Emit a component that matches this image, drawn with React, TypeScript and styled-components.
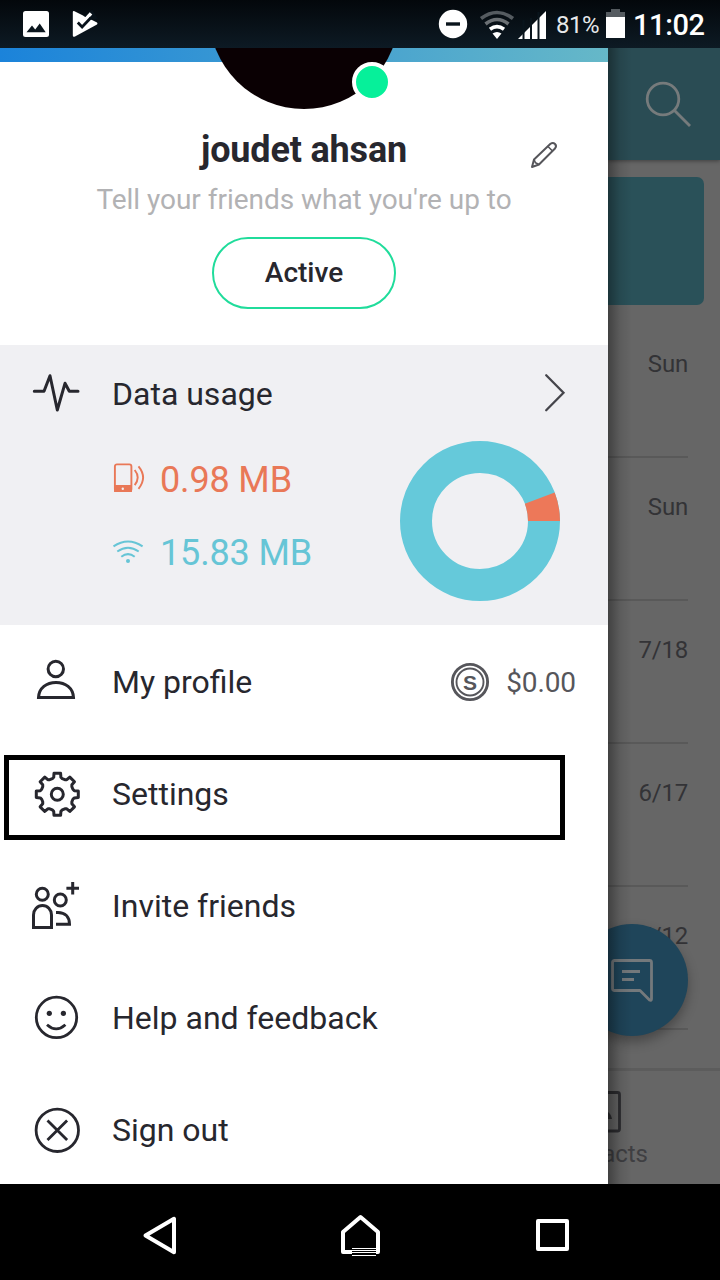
import React from "react";
import styled, { createGlobalStyle } from "styled-components";

const ink = "#27272e";

const GlobalStyle = createGlobalStyle`
  * { box-sizing: border-box; }
  body { margin: 0; background: #000; font-family: Roboto, "Liberation Sans", sans-serif; }
  svg { display: block; flex: none; }
`;

const Phone = styled.div`
  width: 720px;
  height: 1280px;
  display: flex;
  flex-direction: column;
  overflow: hidden;
`;

const StatusBar = styled.header`
  height: 48px;
  flex: none;
  display: flex;
  align-items: center;
  padding: 0 16px 0 20px;
  background: linear-gradient(#03070b, #0d1a24);
  color: #fff;
`;

const StatusGroup = styled.div<{ $end?: boolean }>`
  display: flex;
  align-items: center;
  gap: ${(p) => (p.$end ? 0 : 16)}px;
  margin-left: ${(p) => (p.$end ? "auto" : 0)};
`;

const Battery = styled.span`
  font-size: 24px;
  letter-spacing: -0.5px;
  width: 50px;
  margin-left: 8px;
  line-height: 48px;
  white-space: nowrap;
  padding-top: 2px;
  color: #e6e8ea;
`;

const Clock = styled.span`
  font-size: 29px;
  font-weight: 500;
  letter-spacing: -0.4px;
  line-height: 48px;
  width: 71px;
  margin-left: 7px;
  padding-top: 2px;
  white-space: nowrap;
`;

const Main = styled.main`
  height: 1136px;
  flex: none;
  display: flex;
`;

const Drawer = styled.aside`
  width: 608px;
  flex: none;
  background: #fff;
  overflow: hidden;
  color: ${ink};
`;

const Profile = styled.section`
  height: 297px;
  display: flex;
  flex-direction: column;
  align-items: center;
`;

const Cover = styled.div`
  width: 100%;
  height: 14px;
  flex: none;
  display: flex;
  justify-content: center;
  align-items: flex-end;
  background: linear-gradient(90deg, #1b83da, #66b8c8);
`;

const Avatar = styled.div`
  position: relative;
  width: 190px;
  height: 190px;
  flex: none;
  margin-bottom: -47px;
  border-radius: 50%;
  background: #0a0003;
  clip-path: inset(129px -20px -20px -20px);
`;

const Presence = styled.span`
  position: absolute;
  left: 143px;
  top: 143px;
  width: 40px;
  height: 40px;
  border-radius: 50%;
  border: 4px solid #fff;
  background: #06f09a;
`;

const NameRow = styled.div`
  margin-top: 67px;
  height: 42px;
  width: 100%;
  display: grid;
  grid-template-columns: 1fr auto 1fr;
  align-items: center;
`;

const Name = styled.h1`
  grid-column: 2;
  margin: 0;
  font-size: 36px;
  font-weight: 700;
  letter-spacing: -0.17px;
  line-height: 42px;
  white-space: nowrap;
`;

const EditButton = styled.span`
  justify-self: end;
  padding: 9px 48px 0 0;
`;

const Mood = styled.p`
  margin: 12px 0 0;
  font-size: 28px;
  letter-spacing: -0.03px;
  line-height: 34px;
  color: #b2b2b4;
  white-space: nowrap;
`;

const StatusPill = styled.button`
  margin: 20px 0 0;
  width: 184px;
  height: 72px;
  border: 2px solid #20dc9b;
  border-radius: 36px;
  background: #fff;
  color: ${ink};
  font: 500 28px/68px Roboto, sans-serif;
  padding: 0;
`;

const DataUsage = styled.section`
  height: 280px;
  background: #f0f0f3;
`;

const Row = styled.div`
  height: 112px;
  display: flex;
  align-items: center;
  padding: 0 32px 0 28px;
`;

const DataHeader = styled(Row)`
  height: 96px;
`;

const RowLabel = styled.span<{ $drop?: number }>`
  margin-left: 28px;
  flex: 1;
  padding-top: ${(p) => p.$drop ?? 0}px;
  font-size: 32px;
  line-height: 40px;
  white-space: nowrap;
`;

const UsageBody = styled.div`
  display: flex;
  justify-content: space-between;
  padding: 0 48px 0 112px;
`;

const UsageList = styled.div`
  display: flex;
  flex-direction: column;
  padding-top: 2px;
`;

const UsageItem = styled.div<{ $color: string }>`
  height: 73px;
  display: flex;
  align-items: center;
  gap: 15px;
  color: ${(p) => p.$color};
  font-size: 36px;
  letter-spacing: -0.15px;
  line-height: 44px;
  white-space: nowrap;
`;

const Menu = styled.nav`
  position: relative;
  padding-top: 1px;
`;

const Highlight = styled.div`
  position: absolute;
  left: 4px;
  top: 130px;
  width: 561px;
  height: 85px;
  border: 5px solid #000;
`;

const Credit = styled.span`
  display: flex;
  align-items: center;
  gap: 16px;
  font-size: 28px;
  letter-spacing: -0.1px;
  color: #56565b;
`;

const Peek = styled.div`
  position: relative;
  width: 112px;
  flex: none;
  overflow: hidden;
  background: #666;
  color: #333336;
  display: flex;
  flex-direction: column;
`;

const PeekShade = styled.div`
  position: absolute;
  inset: 0 auto 0 0;
  width: 24px;
  background: linear-gradient(90deg, rgba(0, 0, 0, 0.36), rgba(0, 0, 0, 0.1) 50%, transparent);
`;

const PeekHeader = styled.div`
  height: 112px;
  flex: none;
  padding: 32px 0 0 36px;
  background: #2a4c54;
  box-shadow: 0 1px 4px rgba(0, 0, 0, 0.4);
`;

const Banner = styled.div`
  height: 128px;
  flex: none;
  margin: 17px 16px 10px 0;
  border-radius: 0 7px 7px 0;
  background: #2a5159;
`;

const Chat = styled.div`
  height: 143px;
  flex: none;
  margin-right: 32px;
  border-bottom: 2px solid #595959;
  padding-top: 34px;
  text-align: right;
  font-size: 24px;
  letter-spacing: -0.2px;
  line-height: 30px;
`;

const Compose = styled.div`
  position: absolute;
  left: -32px;
  top: 876px;
  width: 112px;
  height: 112px;
  border-radius: 50%;
  background: #1f455a;
  box-shadow: 0 6px 12px rgba(0, 0, 0, 0.3);
  padding: 32px 0 0 32px;
`;

const Tabs = styled.div`
  margin-top: auto;
  height: 116px;
  flex: none;
  border-top: 3px solid #5c5c5c;
  background: #666;
  padding-top: 18px;
  display: flex;
  flex-direction: column;
  align-items: flex-start;
`;

const TabLabel = styled.span`
  width: 100px;
  margin: 6px 0 0 -60px;
  text-align: right;
  font-size: 24px;
  line-height: 30px;
  color: #3f3f42;
`;

const NavBar = styled.footer`
  height: 96px;
  flex: none;
  display: flex;
  align-items: center;
  justify-content: space-between;
  padding: 8px 144px 0 136px;
  background: #000;
`;

type IconProps = { children: React.ReactNode; width?: number };

const MenuIcon = ({ children, width = 3 }: IconProps) => (
  <svg width="56" height="56" viewBox="0 0 56 56" fill="none" stroke={ink} strokeWidth={width} strokeLinejoin="round">
    {children}
  </svg>
);

const gearPath = (() => {
  const points: string[] = [];
  for (let k = 0; k < 8; k++) {
    const a = (k * Math.PI) / 4;
    [[-5, 15.6], [-3.6, 17], [-3.3, 21], [3.3, 21], [3.6, 17], [5, 15.6]].forEach(([x, r]) => {
      const px = 29.3 + x * Math.cos(a) + r * Math.sin(a);
      const py = 28.3 + x * Math.sin(a) - r * Math.cos(a);
      points.push(`${px.toFixed(2)} ${py.toFixed(2)}`);
    });
  }
  return `M${points.join("L")}Z`;
})();

const StatusIcons = () => (
  <StatusGroup>
    <svg width="32" height="32" viewBox="0 0 32 32">
      <rect x="3" y="3" width="26" height="26" rx="2.5" fill="#fff" />
      <path d="M6.5 24.3 12 17.5l3.2 4 4.5-6 6 8.8z" fill="#0a151d" />
    </svg>
    <svg width="32" height="32" viewBox="0 0 32 32">
      <path d="M6 3 29 14.5Q30 15.500 29 16.500L7 28.500Q4.800 29.500 4.800 27.500V4Q4.800 2.800 6 3Z" fill="#fff" />
      <path d="m15 7.800 4-1.500 5-4.500 6 9-6 1z" fill="#08121a" />
      <path d="m14.500 14.800 8.500-9.500" stroke="#fff" strokeWidth="3.400" />
      <path d="m9.800 14.500 4.300 4.500 9-9.500" fill="none" stroke="#08121a" strokeWidth="2.800" />
    </svg>
  </StatusGroup>
);

const App = () => (
  <Phone>
    <GlobalStyle />
    <StatusBar>
      <StatusIcons />
      <StatusGroup $end>
        <svg width="110" height="48" viewBox="438 0 110 48">
          <circle cx="453" cy="24" r="14.200" fill="#fff" />
          <path d="M446 24h14" stroke="#0a141c" strokeWidth="3.400" />
          <g fill="none" strokeWidth="3.600">
            <path d="M481 18.500Q497 6.500 513 18.500" stroke="#555b60" />
            <path d="M485.500 24Q497 15 508.500 24" stroke="#6b7074" />
            <path d="M490 29.300Q497 24 504 29.300" stroke="#fff" />
          </g>
          <path d="M492.500 33.500Q497 30.500 501.500 33.500L497 39z" fill="#fff" />
          <path d="M518 39 546 11V39Z" fill="#fff" />
          <path d="M523.500 20V40M531 18V40M538.500 12V40" stroke="#09141c" strokeWidth="2" />
        </svg>
        <Battery>81%</Battery>
        <svg width="20" height="48" viewBox="0 0 20 48">
          <path d="M5 9h9v3h5v6H0v-6h5z" fill="#555b60" />
          <path d="M0 17h19v21H0z" fill="#fff" />
        </svg>
        <Clock>11:02</Clock>
      </StatusGroup>
    </StatusBar>

    <Main>
      <Drawer>
        <Profile>
          <Cover>
            <Avatar>
              <Presence />
            </Avatar>
          </Cover>
          <NameRow>
            <Name>joudet ahsan</Name>
            <EditButton>
              <svg width="32" height="32" viewBox="0 0 32 32" fill="none" stroke="#55555a" strokeWidth="2" strokeLinejoin="round">
                <path d="M4 28 6 20.500 22.500 4.800Q25 3 27 5T27 9.500L11 25.500Z" />
                <path d="m6 20.500 1.500 3.300 3.500 1.700M20 7.500l4.500 4.500" strokeWidth="1.600" />
              </svg>
            </EditButton>
          </NameRow>
          <Mood>Tell your friends what you're up to</Mood>
          <StatusPill>Active</StatusPill>
        </Profile>

        <DataUsage>
          <DataHeader>
            <MenuIcon>
              <path d="M6.300 26.300H16L22 10.700 29.300 45 37 18.300 41.300 26.300H50" strokeLinecap="round" />
            </MenuIcon>
            <RowLabel $drop={2}>Data usage</RowLabel>
            <svg width="32" height="48" viewBox="0 0 32 48" fill="none" stroke="#45454b" strokeWidth="2.300">
              <path d="m2.200 6.300 17.300 17.500L2.200 41.300" strokeLinecap="round" />
            </svg>
          </DataHeader>
          <UsageBody>
            <UsageList>
              <UsageItem $color="#e97857">
                <svg width="33" height="34" viewBox="0 0 33 34" fill="none" stroke="currentColor" strokeWidth="1.900">
                  <rect x="2.900" y="1.400" width="16.500" height="26.500" rx="2" />
                  <path d="M3 23h16v5H3z" fill="currentColor" />
                  <circle cx="10.800" cy="25.700" r="1.200" fill="#f0f0f3" stroke="none" />
                  <path d="M22.700 7q6 7.500 0 15.200M26.500 3.300q9.200 11.200 0 22.500" />
                </svg>
                0.98 MB
              </UsageItem>
              <UsageItem $color="#66c5d6">
                <svg width="33" height="34" viewBox="0 0 33 34" fill="none" stroke="currentColor" strokeWidth="2">
                  <path d="M1.500 10.300Q16 .5 30.600 10.300M5.300 15.500Q16 8 26.700 15.500M9.300 20.700Q16 15.500 22.700 20.700" />
                  <circle cx="16" cy="25" r="2" fill="currentColor" stroke="none" />
                </svg>
                15.83 MB
              </UsageItem>
            </UsageList>
            <svg width="160" height="160" viewBox="-80 -80 160 160">
              <circle r="64" fill="none" stroke="#65c9da" strokeWidth="32" />
              <path d="M80 0A80 80 0 0 0 74.700-28.600L44.800-17.200A48 48 0 0 1 48 0Z" fill="#ed7859" />
            </svg>
          </UsageBody>
        </DataUsage>

        <Menu>
          <Row>
            <MenuIcon>
              <circle cx="27.800" cy="15" r="7.700" />
              <path d="M10.500 43.500C11 34 18.500 28.500 28 28.500S45 34 45.500 43.500Z" strokeLinejoin="miter" />
            </MenuIcon>
            <RowLabel>My profile</RowLabel>
            <Credit>
              <svg width="40" height="40" viewBox="0 0 40 40" fill="none" stroke="#56565b">
                <circle cx="20" cy="20" r="17.600" strokeWidth="2.900" />
                <circle cx="20" cy="20" r="13.500" strokeWidth="1.900" />
                <text x="20" y="27.500" textAnchor="middle" fontFamily="Liberation Sans, sans-serif" fontWeight="700" fontSize="21" letterSpacing="0" fill="#56565b" stroke="none">S</text>
              </svg>
              $0.00
            </Credit>
          </Row>
          <Row>
            <MenuIcon>
              <path d={gearPath} />
              <circle cx="29.300" cy="28.300" r="6" />
            </MenuIcon>
            <RowLabel>Settings</RowLabel>
          </Row>
          <Row>
            <MenuIcon>
              <g strokeLinejoin="miter">
                <circle cx="14.300" cy="16.300" r="6" />
                <path d="M5.500 49.500V37a9 9.500 0 0 1 18 0V49.500Z" />
                <circle cx="32.300" cy="22" r="6" />
                <path d="M28 34.500h2c7 0 11.500 4.500 11.500 11.800H28M44.700 4V16.600M38.400 10.300H51" />
              </g>
            </MenuIcon>
            <RowLabel>Invite friends</RowLabel>
          </Row>
          <Row>
            <MenuIcon width={2.8}>
              <circle cx="28.500" cy="27.400" r="20.200" />
              <path d="M19 34.700Q28.200 43 37.400 34.700" />
              <g fill={ink} stroke="none">
                <circle cx="21.300" cy="23.300" r="2.600" />
                <circle cx="35.400" cy="23.300" r="2.600" />
              </g>
            </MenuIcon>
            <RowLabel>Help and feedback</RowLabel>
          </Row>
          <Row>
            <MenuIcon width={2.8}>
              <circle cx="29.300" cy="28.300" r="21.200" />
              <path d="m19.500 18.500 19.600 19.600M39.100 18.500 19.500 38.100" />
            </MenuIcon>
            <RowLabel>Sign out</RowLabel>
          </Row>
          <Highlight />
        </Menu>
      </Drawer>

      <Peek>
        <PeekHeader>
          <svg width="48" height="48" viewBox="0 0 48 48" fill="none" stroke="#767b7c" strokeWidth="2.800">
            <circle cx="19" cy="19" r="15.800" />
            <path d="M30.500 30.500 46 46" />
          </svg>
        </PeekHeader>
        <Banner />
        <div>
          {["Sun", "Sun", "7/18", "6/17", "7/12"].map((date, i) => (
            <Chat key={i}>{date}</Chat>
          ))}
        </div>
        <Compose>
          <svg width="48" height="48" viewBox="0 0 48 48" fill="none" stroke="#74797c" strokeWidth="2.800" strokeLinejoin="round">
            <path d="M6.500 4.500h35q2 0 2 2V43q0 2-2 1L32 34.500H6.500q-2 0-2-2v-26q0-2 2-2ZM14 15.500h18M14 23.500h12" />
          </svg>
        </Compose>
        <Tabs>
          <svg width="14" height="44" viewBox="0 0 14 44" fill="none" stroke="#2d2d30" strokeWidth="2.800">
            <path d="M-10 3.500H9.500q2 0 2 2V40q0 2-2 2H-10" />
            <path d="M0 23q3 2 4 7H-2z" fill="#2d2d30" stroke="none" />
          </svg>
          <TabLabel>Contacts</TabLabel>
        </Tabs>
        <PeekShade />
      </Peek>
    </Main>

    <NavBar>
      <svg width="48" height="48" viewBox="136 1212 48 48" fill="none" stroke="#fff" strokeWidth="4" strokeLinejoin="round">
        <path d="M145.500 1235.500 174 1218.800V1252.300Z" />
      </svg>
      <svg width="48" height="48" viewBox="332 1212 48 48" overflow="visible" fill="none" stroke="#fff" strokeWidth="4" strokeLinejoin="round">
        <path d="M360.500 1217 378 1232V1252H343V1232Z" />
        <path d="M352 1247h24v9h-24z" fill="#000" stroke="none" />
        <path d="M352 1248.500h24M352 1250.500h24M352 1252.500h24M352 1255.500h24" strokeWidth="1" />
      </svg>
      <svg width="48" height="48" viewBox="528 1212 48 48" fill="none" stroke="#fff" strokeWidth="4" strokeLinejoin="round">
        <path d="M538 1221H567V1249H538Z" />
      </svg>
    </NavBar>
  </Phone>
);

export default App;
